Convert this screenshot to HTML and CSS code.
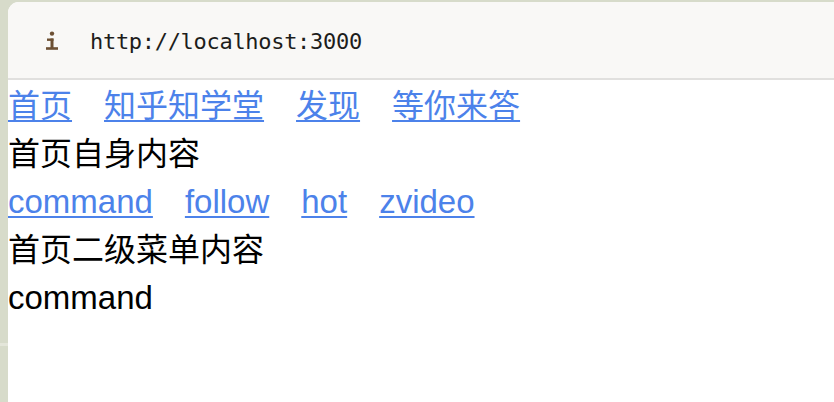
FILE: index.html
```
<!DOCTYPE html>
<html lang="zh-CN">
<head>
<meta charset="utf-8">
<title>localhost:3000</title>
<link rel="stylesheet" href="styles.css">
</head>
<body>
<div class="window">
  <header class="addressbar">
    <svg class="info-icon" width="14" height="20" viewBox="0 0 14 20" aria-hidden="true">
      <circle cx="7" cy="2.6" r="2.2" fill="#6d5033"/>
      <rect x="2" y="7.5" width="6.5" height="2.4" fill="#6d5033"/>
      <rect x="5.5" y="7.5" width="3" height="10" fill="#6d5033"/>
      <rect x="1" y="16.2" width="12" height="2.6" fill="#6d5033"/>
    </svg>
    <span class="url">http://localhost:3000</span>
  </header>
  <main class="page">
    <nav class="nav">
      <a href="#">首页</a>
      <a href="#">知乎知学堂</a>
      <a href="#">发现</a>
      <a href="#">等你来答</a>
    </nav>
    <div class="line">首页自身内容</div>
    <nav class="nav latin">
      <a href="#">command</a>
      <a href="#">follow</a>
      <a href="#">hot</a>
      <a href="#">zvideo</a>
    </nav>
    <div class="line">首页二级菜单内容</div>
    <div class="line latin">command</div>
  </main>
</div>
</body>
</html>
```
FILE: styles.css
```
html, body {
  margin: 0;
  height: 100%;
}
body {
  background: linear-gradient(to bottom, #d7dbca 0, #d7dbca 343px, #e4e6da 343px, #e4e6da 346px, #d7dbca 346px);
  padding: 2px 0 0 8px;
  box-sizing: border-box;
  overflow: hidden;
}
.window {
  background: #ffffff;
  border-top-left-radius: 11px;
  height: 100%;
  overflow: hidden;
}
.addressbar {
  height: 78px;
  box-sizing: border-box;
  background: #f9f8f6;
  border-bottom: 2px solid #e1e0de;
  display: flex;
  align-items: center;
  padding-left: 37px;
}
.info-icon {
  display: block;
  margin-top: 2px;
}
.url {
  margin-left: 31px;
  font-family: "DejaVu Sans Mono", "Liberation Mono", monospace;
  font-size: 22px;
  letter-spacing: -0.3px;
  color: #1d1d1b;
  margin-top: 2px;
}
.page {
  font-family: "Liberation Sans", "Noto Sans CJK SC", sans-serif;
  font-size: 32px;
  line-height: 48px;
  color: #000000;
  padding-top: 2px;
}
.nav {
  display: flex;
  gap: 32px;
}
.latin {
  font-size: 33px;
}
.nav a {
  color: #4c82ea;
  text-decoration: underline;
  text-decoration-thickness: 2px;
  text-underline-offset: 3px;
}
.line {
  white-space: nowrap;
}
```
